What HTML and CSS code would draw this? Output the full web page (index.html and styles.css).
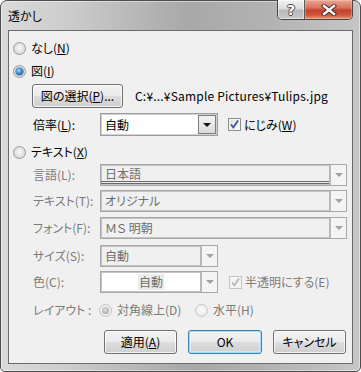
FILE: index.html
```html
<!DOCTYPE html>
<html lang="ja">
<head>
<meta charset="utf-8">
<title>透かし</title>
<link rel="stylesheet" href="styles.css">
</head>
<body>
<div class="win">
  <div class="titlebar">
    <span class="title">透かし</span>
    <div class="caption">
      <div class="cap-btn cap-help"><span class="q">?</span></div>
      <div class="cap-btn cap-close">
        <svg width="16" height="12" viewBox="0 0 16 12"><path d="M3 2 L13 10 M13 2 L3 10" stroke="#3a2a28" stroke-width="4.2" stroke-linecap="square"/><path d="M3 2 L13 10 M13 2 L3 10" stroke="#ffffff" stroke-width="2.4" stroke-linecap="square"/></svg>
      </div>
    </div>
  </div>
  <div class="client">
    <div class="row radio-row row-none"><span class="radio"></span><span class="rl">なし(<u>N</u>)</span></div>
    <div class="row radio-row row-pic"><span class="radio checked"></span><span class="rl">図(<u>I</u>)</span></div>
    <div class="row btn-row"><div class="btn pick">図の選択(<u>P</u>)...</div><span class="path">C:¥...¥Sample Pictures¥Tulips.jpg</span></div>
    <div class="row field row-scale">
      <span class="lbl">倍率(<u>L</u>):</span>
      <div class="combo narrow enabled"><span class="val">自動</span><span class="drop"><i class="tri"></i></span></div>
      <span class="check checked"><svg width="11" height="11" viewBox="0 0 11 11"><path d="M2 5.5 L4.3 8.5 L9 1.5" fill="none" stroke="#3b56a0" stroke-width="1.8"/></svg></span><span class="cl">にじみ(<u>W</u>)</span>
    </div>
    <div class="row radio-row row-text"><span class="radio"></span><span class="rl">テキスト(<u>X</u>)</span></div>
    <div class="row field off row-lang">
      <span class="lbl">言語(L):</span>
      <div class="combo wide"><span class="val lined">日本語</span><span class="drop"><i class="tri"></i></span></div>
    </div>
    <div class="row field off row-ttext">
      <span class="lbl">テキスト(T):</span>
      <div class="combo wide"><span class="val">オリジナル</span><span class="drop"><i class="tri"></i></span></div>
    </div>
    <div class="row field off row-font">
      <span class="lbl">フォント(F):</span>
      <div class="combo wide"><span class="val">ＭＳ 明朝</span><span class="drop"><i class="tri"></i></span></div>
    </div>
    <div class="row field off row-size">
      <span class="lbl">サイズ(S):</span>
      <div class="combo narrow"><span class="val">自動</span><span class="drop"><i class="tri"></i></span></div>
    </div>
    <div class="row field off row-color">
      <span class="lbl">色(C):</span>
      <div class="combo narrow white"><span class="val center"><span class="sel">自動</span></span><span class="drop"><i class="tri"></i></span></div>
      <span class="check checked dis"><svg width="11" height="11" viewBox="0 0 11 11"><path d="M2 5.5 L4.3 8.5 L9 1.5" fill="none" stroke="#b4b4b4" stroke-width="1.6"/></svg></span><span class="cl">半透明にする(E)</span>
    </div>
    <div class="row field off row-layout">
      <span class="lbl short">レイアウト :</span>
      <div class="opt first"><span class="radio dis checked"></span><span class="rl">対角線上(D)</span></div>
      <div class="opt"><span class="radio dis"></span><span class="rl">水平(H)</span></div>
    </div>
    <div class="row row-buttons">
      <div class="btn">適用(<u>A</u>)</div>
      <div class="btn default wide-btn">OK</div>
      <div class="btn">キャンセル</div>
    </div>
  </div>
</div>
</body>
</html>
```

FILE: styles.css
```css
* { box-sizing: border-box; }
html, body { margin: 0; padding: 0; background: #ffffff; }
body {
  font-family: "Noto Sans CJK JP", "Noto Sans", sans-serif;
  font-size: 12px;
  line-height: 16px;
  color: #000;
  font-feature-settings: "palt";
}
u { text-decoration: underline; text-underline-offset: 1px; }

.win {
  width: 361px;
  height: 372px;
  display: flex;
  flex-direction: column;
  border: 1px solid #4e4e4e;
  border-radius: 7px 7px 5px 5px;
  background: linear-gradient(90deg, #dadada 0%, #cdcdcd 18%, #a8a8a8 52%, #b1b1b1 72%, #c6c6c6 100%);
  box-shadow: inset 0 0 0 1px rgba(255,255,255,0.45);
  padding: 0 7px 7px 7px;
}

.titlebar {
  height: 29px;
  display: flex;
  align-items: flex-start;
  flex: none;
}
.title {
  margin-top: 6px;
  line-height: 17px;
  font-size: 12px;
  color: #000;
}
.caption {
  margin-left: auto;
  margin-top: -1px;
  display: flex;
  height: 20px;
  border: 1px solid #474747;
  border-top: none;
  border-radius: 0 0 5px 5px;
  overflow: hidden;
}
.cap-btn { height: 19px; display: flex; align-items: center; justify-content: center; }
.cap-help {
  width: 27px;
  border-right: 1px solid #5a5a5a;
  background: linear-gradient(#f1f1f1 0%, #dcdcdc 45%, #b9b9b9 55%, #c9c9c9 100%);
  box-shadow: inset 0 0 0 1px rgba(255,255,255,0.5);
}
.q {
  font-family: "DejaVu Sans", sans-serif;
  font-weight: bold;
  font-size: 14px;
  color: #fff;
  line-height: 16px;
  text-shadow: -1px 0 #4a4a4a, 1px 0 #4a4a4a, 0 -1px #4a4a4a, 0 1px #4a4a4a;
}
.cap-close {
  width: 47px;
  background: linear-gradient(#e9a795 0%, #d9735e 40%, #c4412b 55%, #cf553a 78%, #e49a78 100%);
  box-shadow: inset 0 0 0 1px rgba(255,220,200,0.35);
}

.client {
  flex: 1;
  background: #f0f0f0;
  border: 1px solid #6b6b6b;
  display: flex;
  flex-direction: column;
}

.row { display: flex; align-items: center; flex: none; }
.radio-row { height: 18px; padding-left: 4px; }
.rl { margin-left: 5px; white-space: nowrap; }

.row-none { margin-top: 8px; }
.row-pic { margin-top: 5px; }
.btn-row { margin-top: 4px; height: 24px; padding-left: 23px; }
.row-scale { margin-top: 5px; height: 23px; }
.row-text { margin-top: 7px; }
.row-lang { margin-top: 3px; height: 22px; }
.row-ttext { margin-top: 4px; height: 22px; }
.row-font { margin-top: 5px; height: 22px; }
.row-size { margin-top: 6px; height: 22px; }
.row-color { margin-top: 4px; height: 22px; }
.row-layout { margin-top: 8px; height: 18px; }
.row-buttons { margin-top: 11px; height: 24px; justify-content: flex-end; padding-right: 6px; gap: 11px; }

.field { padding-left: 24px; }
.lbl { width: 67px; flex: none; white-space: nowrap; }
.lbl.short { width: 66px; }
.off { color: #7b7b7b; }

/* radios */
.radio {
  width: 13px; height: 13px; flex: none;
  border-radius: 50%;
  border: 1px solid #9a9a9a;
  background: radial-gradient(circle at 50% 45%, #f7f7f7 0%, #e6e6e6 45%, #cfcfcf 100%);
  position: relative;
}
.radio.checked::after {
  content: "";
  position: absolute;
  left: 2px; top: 2px;
  width: 7px; height: 7px;
  border-radius: 50%;
  background: radial-gradient(circle at 40% 35%, #a9dcff 0%, #3f95dc 40%, #1b4f8f 85%);
  box-shadow: 0 0 0 0.5px #24538c;
}
.radio.dis {
  border-color: #c6c6c6;
  background: radial-gradient(circle at 50% 45%, #fbfbfb 0%, #f0f0f0 50%, #e2e2e2 100%);
}
.radio.dis.checked::after {
  background: radial-gradient(circle at 45% 40%, #e0e0e0 0%, #b4b4b4 60%, #a0a0a0 100%);
  box-shadow: none;
}
.opt { display: flex; align-items: center; }
.opt.first { width: 96px; }

/* buttons */
.btn {
  width: 73px; height: 24px;
  display: flex; align-items: center; justify-content: center;
  border: 1px solid #707070;
  border-radius: 3px;
  background: linear-gradient(#f2f2f2 0%, #ebebeb 48%, #dddddd 52%, #cfcfcf 100%);
  box-shadow: inset 0 0 0 1px rgba(255,255,255,0.75);
  white-space: nowrap;
  color: #000;
}
.btn.pick { width: 91px; }
.btn.wide-btn { width: 74px; }
.btn.default {
  border-color: #3c7fb1;
  box-shadow: inset 0 0 0 1px #a5dbf6, inset 0 0 0 2px rgba(255,255,255,0.4);
}
.path { margin-left: 12px; white-space: nowrap; letter-spacing: 0.2px; }

/* combos */
.combo {
  display: flex;
  height: 100%;
  flex: none;
  border: 1px solid #a8a8a8;
  box-shadow: inset 0 0 0 1px #c4c4c4;
  padding: 1px;
  background: #f0f0f0;
}
.combo.narrow { width: 118px; }
.combo.wide { width: 247px; }
.combo.white { background: #ffffff; }
.combo.enabled { background: #ffffff; border-color: #9c9c9c; box-shadow: inset 0 0 0 1px #d2d2d2; }
.val {
  flex: 1;
  padding-left: 3px;
  display: flex; align-items: center;
  white-space: nowrap;
  color: #6d6d6d;
}
.enabled .val { color: #000; }
.val.center { justify-content: center; padding-left: 0; }
.sel { background: #ececec; padding: 0 1px; }
.val.lined { border-bottom: 3px double #686868; margin-left: -1px; padding-left: 4px; }
.drop {
  width: 17px; flex: none;
  display: flex; align-items: center; justify-content: center;
  border-left: 2px solid #b9b9b9;
  background: #f4f4f4;
  margin: -1px -1px -1px 0;
}
.enabled .drop {
  border: 1px solid #7d7d7d;
  margin: 0;
  width: 18px;
  background: linear-gradient(#f3f3f3, #dadada);
}
.tri {
  width: 0; height: 0;
  border-left: 4px solid transparent;
  border-right: 4px solid transparent;
  border-top: 4px solid #a2a2a2;
}
.enabled .tri { border-top-color: #111; }

/* checkboxes */
.check {
  width: 13px; height: 13px; flex: none;
  margin-left: 10px;
  border: 1px solid #8e8f8f;
  background: linear-gradient(135deg, #dcdcdc, #ffffff);
  box-shadow: inset 0 0 0 1px #f4f4f4;
  display: flex; align-items: center; justify-content: center;
}
.check.dis {
  margin-left: 11px;
  border-color: #c4c4c4;
  background: #f4f4f4;
}
.cl { margin-left: 3px; white-space: nowrap; }
```
